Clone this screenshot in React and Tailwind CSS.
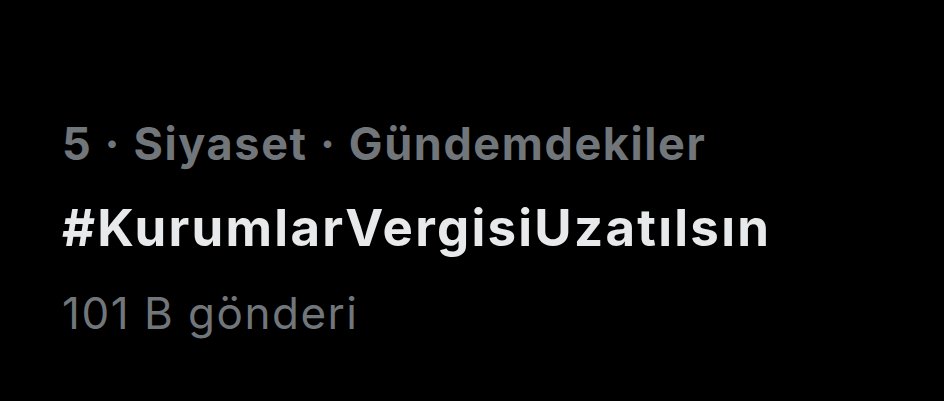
import React from "react";

export default function App() {
  return (
    <div
      className="w-[944px] h-[401px] bg-black flex flex-col pl-[62px] pt-[112px]"
      style={{ fontFamily: "Inter, 'Noto Sans', sans-serif" }}
    >
      <p className="text-[#71767b] text-[45px] font-bold leading-[64px] tracking-[1.6px]">
        5 · Siyaset · Gündemdekiler
      </p>
      <p className="text-[#e7e9ea] text-[51px] font-bold leading-[80px] tracking-[2.25px] mt-[12px]">
        #KurumlarVergisiUzatılsın
      </p>
      <p className="text-[#71767b] text-[44px] leading-[80px] tracking-[1.5px] mt-[5px]">
        101 B gönderi
      </p>
    </div>
  );
}
